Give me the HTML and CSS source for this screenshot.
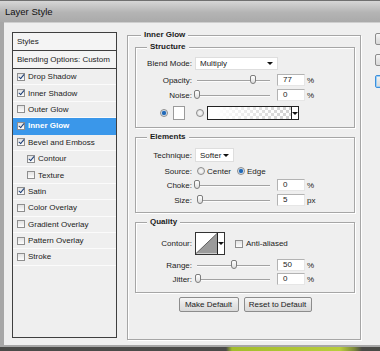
FILE: index.html
```html
<!DOCTYPE html>
<html lang="en">
<head>
<meta charset="utf-8">
<title>Layer Style</title>
<link rel="stylesheet" href="styles.css">
</head>
<body>
<div class="window">
  <div class="titlebar">Layer Style</div>
  <div class="client">

    <div class="styles-panel">
      <div class="panel-head">Styles</div>
      <div class="panel-head">Blending Options: Custom</div>
      <ul class="style-list">
        <li><span class="cb on"></span>Drop Shadow</li>
        <li><span class="cb on"></span>Inner Shadow</li>
        <li><span class="cb"></span>Outer Glow</li>
        <li class="selected"><span class="cb on"></span>Inner Glow</li>
        <li><span class="cb on"></span>Bevel and Emboss</li>
        <li class="sub"><span class="cb on"></span>Contour</li>
        <li class="sub"><span class="cb"></span>Texture</li>
        <li><span class="cb on"></span>Satin</li>
        <li><span class="cb"></span>Color Overlay</li>
        <li><span class="cb"></span>Gradient Overlay</li>
        <li><span class="cb"></span>Pattern Overlay</li>
        <li><span class="cb"></span>Stroke</li>
      </ul>
    </div>

    <fieldset class="group outer">
      <legend>Inner Glow</legend>

      <fieldset class="group structure">
        <legend>Structure</legend>
        <div class="row blend">
          <span class="lbl">Blend Mode:</span>
          <span class="sel sel-mode">Multiply<i class="arrow"></i></span>
        </div>
        <div class="row opacity">
          <span class="lbl">Opacity:</span>
          <span class="slider"><i class="thumb" style="left: 77%"></i></span>
          <span class="num">77</span><span class="unit">%</span>
        </div>
        <div class="row noise">
          <span class="lbl">Noise:</span>
          <span class="slider"><i class="thumb" style="left: 0%"></i></span>
          <span class="num">0</span><span class="unit">%</span>
        </div>
        <div class="row colors">
          <span class="radio on"></span>
          <span class="swatch"></span>
          <span class="radio second"></span>
          <span class="gradient"><span class="fill"></span><span class="drop"><i class="arrow"></i></span></span>
        </div>
      </fieldset>

      <fieldset class="group elements">
        <legend>Elements</legend>
        <div class="row technique">
          <span class="lbl">Technique:</span>
          <span class="sel sel-tech">Softer<i class="arrow"></i></span>
        </div>
        <div class="row source">
          <span class="lbl">Source:</span>
          <span class="radio"></span><span class="opt">Center</span>
          <span class="radio on edge"></span><span class="opt">Edge</span>
        </div>
        <div class="row choke">
          <span class="lbl">Choke:</span>
          <span class="slider"><i class="thumb" style="left: 0%"></i></span>
          <span class="num">0</span><span class="unit">%</span>
        </div>
        <div class="row size">
          <span class="lbl">Size:</span>
          <span class="slider"><i class="thumb" style="left: 4%"></i></span>
          <span class="num">5</span><span class="unit">px</span>
        </div>
      </fieldset>

      <fieldset class="group quality">
        <legend>Quality</legend>
        <div class="row contour">
          <span class="lbl">Contour:</span>
          <span class="curve">
            <svg width="22" height="21" viewBox="0 0 22 21">
              <polygon points="0,21 22,0 22,21" fill="#9b9b9b"/>
              <line x1="0" y1="21" x2="22" y2="0" stroke="#5a5a5a" stroke-width="1"/>
            </svg>
            <span class="drop"><i class="arrow"></i></span>
          </span>
          <span class="cb anti"></span><span class="opt">Anti-aliased</span>
        </div>
        <div class="row range">
          <span class="lbl">Range:</span>
          <span class="slider"><i class="thumb" style="left: 50%"></i></span>
          <span class="num">50</span><span class="unit">%</span>
        </div>
        <div class="row jitter">
          <span class="lbl">Jitter:</span>
          <span class="slider"><i class="thumb" style="left: 1%"></i></span>
          <span class="num">0</span><span class="unit">%</span>
        </div>
      </fieldset>

      <div class="actions">
        <span class="btn btn-make">Make Default</span>
        <span class="btn btn-reset">Reset to Default</span>
      </div>
    </fieldset>

    <div class="side-buttons">
      <span class="btn side"></span>
      <span class="btn side"></span>
      <span class="btn side default"></span>
    </div>

  </div>
</div>
<div class="desktop"></div>
</body>
</html>
```

FILE: styles.css
```css
* { box-sizing: border-box; }
html, body { margin: 0; padding: 0; }
body {
	width: 380px;
	height: 351px;
	overflow: hidden;
	background: #3d3d3b;
	font-family: "Liberation Sans", Arial, sans-serif;
	font-size: 8px;
	color: #1b1b1b;
}

/* window chrome */
.window {
	height: 347px;
	background: #a7a7a7;
	padding-bottom: 2px;
	display: flex;
	flex-direction: column;
}
.titlebar {
	height: 22px;
	flex: none;
	border-top: 1px solid #707070;
	background: linear-gradient(#d6d6d6, #b4b4b4 55%, #aaaaaa);
	padding-left: 5px;
	line-height: 21px;
	font-size: 9.5px;
	color: #111;
}
.client {
	flex: 1;
	margin-left: 4px;
	background: #efefef;
	border-top: 1px solid #cfcfcf;
	display: flex;
	align-items: flex-start;
	overflow: hidden;
}
.desktop {
	height: 4px;
	background: linear-gradient(to right, #4b4b49 0, #4b4b49 226px, #a3bd2c 232px, #b9cd3c 340px, #7d8a3a 354px, #4a4a46 362px);
}

/* styles list */
.styles-panel {
	width: 105px;
	height: 306px;
	flex: none;
	margin: 9px 0 0 8px;
	border: 1px solid #3f3f3f;
	background: #efefef;
}
.panel-head {
	height: 18px;
	line-height: 17px;
	padding-left: 4px;
	border-bottom: 1px solid #3f3f3f;
	background: #f4f4f4;
}
.style-list {
	list-style: none;
	margin: 0;
	padding: 0;
}
.style-list li {
	height: 16.4px;
	display: flex;
	align-items: center;
	padding-left: 4px;
	border-bottom: 1px solid #fbfbfb;
}
.style-list li.sub { padding-left: 14px; }
.style-list li.selected {
	background: #3a97ea;
	color: #fff;
	font-weight: bold;
	border-bottom-color: #3a97ea;
}

.cb {
	position: relative;
	flex: none;
	width: 8px;
	height: 8px;
	margin-right: 3px;
	border: 1px solid #8e8e8e;
	background: linear-gradient(#e2e2e2, #fdfdfd);
}
.cb.on::after {
	content: "";
	position: absolute;
	left: 2px;
	top: -1px;
	width: 2px;
	height: 5px;
	border: solid #1d3f78;
	border-width: 0 1.5px 1.5px 0;
	transform: rotate(40deg);
}

/* group boxes */
.group {
	margin: 0;
	padding: 0;
	min-width: 0;
	border: 1px solid #a6a6a6;
	box-shadow: inset 1px 1px 0 #fff, 1px 1px 0 #fff;
}
.group > legend {
	padding: 0 3px;
	margin-left: 11px;
	line-height: 10px;
	font-weight: bold;
	background: #efefef;
}
.outer {
	width: 234px;
	flex: none;
	margin: 7px 0 0 10px;
	padding: 2px 5px 27px 7px;
}
.outer > legend { margin-left: 6px; }
.structure { padding-bottom: 7px; }
.elements { margin-top: 4px; padding-bottom: 6px; }
.quality { margin-top: 4px; padding-bottom: 7px; }

.row {
	display: flex;
	align-items: center;
	height: 12px;
}
.lbl {
	flex: none;
	width: 56px;
	text-align: right;
}
.blend { margin-top: 5px; height: 13px; }
.opacity { margin-top: 4px; }
.noise { margin-top: 3px; }
.colors { margin-top: 5px; height: 14px; padding-left: 24px; }
.technique { margin-top: 6px; height: 14px; }
.source { margin-top: 3px; }
.choke { margin-top: 2px; }
.size { margin-top: 3px; }
.contour { margin-top: 5px; height: 23px; }
.range { margin-top: 4px; }
.jitter { margin-top: 2px; }

/* controls */
.sel {
	display: flex;
	align-items: center;
	justify-content: space-between;
	height: 100%;
	margin-left: 3px;
	padding: 0 4px;
	background: #fff;
	border: 1px solid #dedede;
}
.sel-mode { width: 83px; }
.sel-tech { width: 39px; }
.arrow {
	width: 0;
	height: 0;
	border-left: 3px solid transparent;
	border-right: 3px solid transparent;
	border-top: 3px solid #111;
}

.slider {
	position: relative;
	width: 73px;
	height: 12px;
	margin-left: 5px;
	flex: none;
}
.slider::before {
	content: "";
	position: absolute;
	left: 0;
	right: 0;
	top: 6px;
	border-top: 1px solid #a2a2a2;
	border-bottom: 1px solid #fcfcfc;
}
.thumb {
	position: absolute;
	top: 1px;
	width: 6px;
	height: 9px;
	border: 1px solid #7c7c7c;
	border-radius: 2px 2px 3px 3px;
	background: linear-gradient(#fff, #dedede);
	transform: translateX(-50%);
}
.num {
	width: 28px;
	height: 12px;
	margin-left: 7px;
	padding-left: 5px;
	line-height: 10px;
	background: #fff;
	border: 1px solid;
	border-color: #b3b3b3 #e6e6e6 #e6e6e6 #b3b3b3;
	flex: none;
}
.unit { margin-left: 2px; }

.radio {
	flex: none;
	width: 8px;
	height: 8px;
	border-radius: 50%;
	border: 1px solid #8c8c8c;
	background: radial-gradient(circle, #fafafa, #d9d9d9);
}
.radio.on {
	background: radial-gradient(circle, #1f63ad 0, #2a72c0 1.8px, #dde7f1 2.6px);
}
.source .radio { margin-left: 5px; }
.source .radio.edge { margin-left: 6px; }
.opt { margin-left: 2px; }

.swatch {
	width: 12px;
	height: 14px;
	margin-left: 5px;
	background: #fff;
	border: 1px solid #9a9a9a;
}
.radio.second { margin-left: 11px; }
.gradient {
	display: flex;
	width: 92px;
	height: 14px;
	margin-left: 3px;
	border: 1px solid #222;
	background: #fff;
}
.gradient .fill {
	flex: 1;
	background:
		linear-gradient(to right, #fff 10%, rgba(255,255,255,0) 90%),
		repeating-conic-gradient(#d4d4d4 0 25%, #fff 0 50%) 0 0 / 6px 6px;
}
.drop {
	display: flex;
	align-items: center;
	justify-content: center;
	width: 7px;
	border-left: 1px solid #222;
	background: #fff;
}

.curve {
	display: flex;
	width: 30px;
	height: 23px;
	margin-left: 3px;
	border: 1px solid #333;
	background: #fff;
}
.curve svg { display: block; }
.cb.anti { margin-left: 10px; margin-right: 1px; }

/* buttons */
.actions {
	display: flex;
	justify-content: center;
	gap: 5px;
	margin-top: 4px;
}
.btn {
	display: flex;
	align-items: center;
	justify-content: center;
	height: 15px;
	border: 1px solid #8c8c8c;
	border-radius: 2px;
	background: linear-gradient(#f6f6f6, #e4e4e4 50%, #d9d9d9);
}
.btn-make { width: 60px; }
.btn-reset { width: 68px; }

.side-buttons {
	display: flex;
	flex-direction: column;
	gap: 9px;
	margin: 10px 0 0 14px;
}
.btn.side { width: 60px; height: 12px; }
.btn.side.default {
	height: 13px;
	border: 1px solid #3d8fdc;
	box-shadow: inset 0 0 0 1px #9cd0f5;
}
```
